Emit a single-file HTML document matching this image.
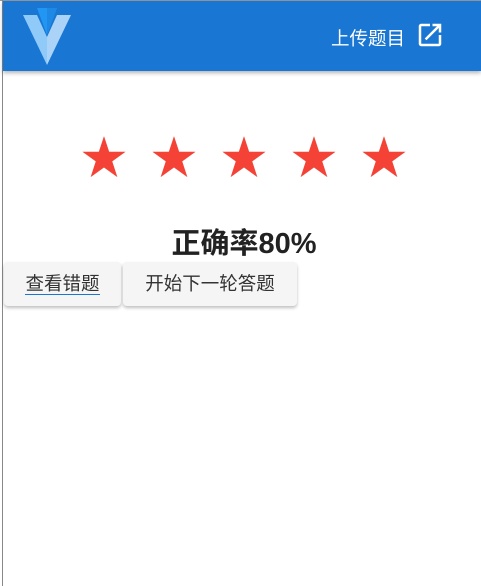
<!DOCTYPE html>
<html><head><meta charset="utf-8"><style>
body{margin:0;width:481px;height:586px;background:#fff;position:relative;overflow:hidden;font-family:"Liberation Sans","Noto Sans CJK SC",sans-serif}
.lb{position:absolute;left:2px;top:0;width:1px;height:586px;background:#888}
.tb{position:absolute;left:0;top:0;width:481px;height:1px;background:#999}
.hd{position:absolute;left:3px;top:1px;width:478px;height:70px;background:#1976d2;box-shadow:0 2px 4px rgba(0,0,0,.3)}
.up{position:absolute;left:328px;top:24px;color:#fff;font-size:18.5px}
.star{position:absolute;top:135px;color:#f44336;font-size:46px;line-height:46px}
.rate{position:absolute;left:0;width:488px;top:220px;text-align:center;font-weight:bold;font-size:29px;color:#222}
.btn{position:absolute;top:262px;height:44px;background:#f5f5f5;border-radius:4px;box-shadow:0 2px 3px rgba(0,0,0,.25);font-size:18.5px;color:#333;line-height:44px;text-align:center}
</style></head><body>
<div class="tb"></div><div class="lb"></div>
<div class="hd">
<svg style="position:absolute;left:20px;top:6px" width="52" height="60" viewBox="0 0 52 60">
<polygon points="0,8 24,58 24,30 14,8" fill="#90caf9"/>
<polygon points="48,8 24,58 24,30 34,8" fill="#bbdefb" opacity=".9"/>
<polygon points="14,1 34,1 24,28" fill="#2196f3"/>
<polygon points="24,1 34,1 24,28" fill="#1e88e5"/>
</svg>
<div class="up">上传题目</div>
<svg style="position:absolute;left:412px;top:19px" width="30" height="30" viewBox="0 0 24 24"><path d="M19 19H5V5h7V3H5a2 2 0 0 0-2 2v14a2 2 0 0 0 2 2h14c1.1 0 2-.9 2-2v-7h-2v7zM14 3v2h3.59l-9.83 9.83 1.41 1.41L19 6.41V10h2V3h-7z" fill="#fff"/></svg>
</div>
<div class="star" style="left:81px">★</div>
<div class="star" style="left:151px">★</div>
<div class="star" style="left:221px">★</div>
<div class="star" style="left:291px">★</div>
<div class="star" style="left:361px">★</div>
<div class="rate">正确率80%</div>
<div class="btn" style="left:4px;width:117px"><span style="border-bottom:1px solid #1976d2;line-height:20px;display:inline-block">查看错题</span></div>
<div class="btn" style="left:123px;width:174px">开始下一轮答题</div>
</body></html>
